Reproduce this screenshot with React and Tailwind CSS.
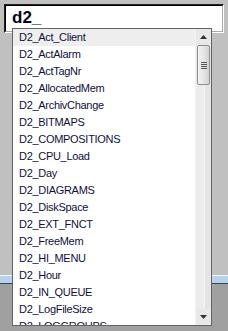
import React from "react";

const items = [
  "D2_Act_Client",
  "D2_ActAlarm",
  "D2_ActTagNr",
  "D2_AllocatedMem",
  "D2_ArchivChange",
  "D2_BITMAPS",
  "D2_COMPOSITIONS",
  "D2_CPU_Load",
  "D2_Day",
  "D2_DIAGRAMS",
  "D2_DiskSpace",
  "D2_EXT_FNCT",
  "D2_FreeMem",
  "D2_HI_MENU",
  "D2_Hour",
  "D2_IN_QUEUE",
  "D2_LogFileSize",
  "D2_LOGGROUPS",
];

function Arrow({ down }) {
  return (
    <svg width="7" height="4" viewBox="0 0 7 4">
      {down ? (
        <polygon points="0,0 7,0 3.5,4" fill="#333" />
      ) : (
        <polygon points="0,4 7,4 3.5,0" fill="#333" />
      )}
    </svg>
  );
}

function Scrollbar() {
  return (
    <div className="w-[16px] flex flex-col bg-[#e8e8e8] border-l border-[#f2f2f2]">
      <div className="h-[16px] flex items-center justify-center">
        <Arrow />
      </div>
      <div className="mx-[1px] h-[40px] rounded-[2px] border border-[#8e8f8f] bg-gradient-to-r from-[#f3f3f3] via-[#e6e6e6] to-[#d2d2d2] flex items-center justify-center">
        <div className="flex flex-col gap-[1px]">
          <div className="w-[6px] h-px bg-[#555]" />
          <div className="w-[6px] h-px bg-[#555]" />
          <div className="w-[6px] h-px bg-[#555]" />
          <div className="w-[6px] h-px bg-[#555]" />
        </div>
      </div>
      <div className="flex-1 flex">
        <div className="w-[8px] bg-[#ececec]" />
        <div className="flex-1 bg-[#e4e4e4] border-l border-[#f4f4f4]" />
      </div>
      <div className="h-[16px] flex items-center justify-center">
        <Arrow down />
      </div>
    </div>
  );
}

export default function App() {
  return (
    <div className="w-[228px] h-[331px] relative overflow-hidden flex flex-col">
      {/* desktop / window background */}
      <div className="h-[275px] bg-[#c0c0c0]" />
      <div className="h-px bg-[#f4f4f4]" />
      <div className="h-[7px] bg-[#b9d1ea]" />
      <div className="h-px bg-[#20505a]" />
      <div className="flex-1 bg-[#a0a0a0]" />

      {/* edit box */}
      <div className="absolute left-[4px] top-[4px] w-[220px] h-[29px] border border-t-[#202020] border-l-[#202020] border-r-[#ffffff] border-b-[#ffffff]">
        <div className="h-full bg-white border border-t-[#000000] border-l-[#000000] border-r-[#a8a8a8] border-b-[#a8a8a8] pl-[6px] leading-[22px]">
          <span
            className="text-[17px] font-bold text-[#050520]"
            style={{ fontFamily: '"Liberation Sans", Arial, sans-serif' }}
          >
            d2_
          </span>
        </div>
      </div>

      {/* dropdown list */}
      <div className="absolute left-[12px] top-[28px] w-[200px] h-[298px] border border-[#646464] bg-white flex overflow-hidden">
        <div className="flex-1 overflow-hidden">
          {items.map((it, i) => (
            <div
              key={it}
              className={
                "h-[17px] leading-[17px] pl-[6px] text-[11px] tracking-[-0.3px] text-[#10103c] whitespace-nowrap " +
                (i === 0 ? "bg-[#eeeeee]" : "")
              }
              style={{ fontFamily: '"Liberation Sans", Arial, sans-serif' }}
            >
              {it}
            </div>
          ))}
        </div>
        <Scrollbar />
      </div>
    </div>
  );
}
